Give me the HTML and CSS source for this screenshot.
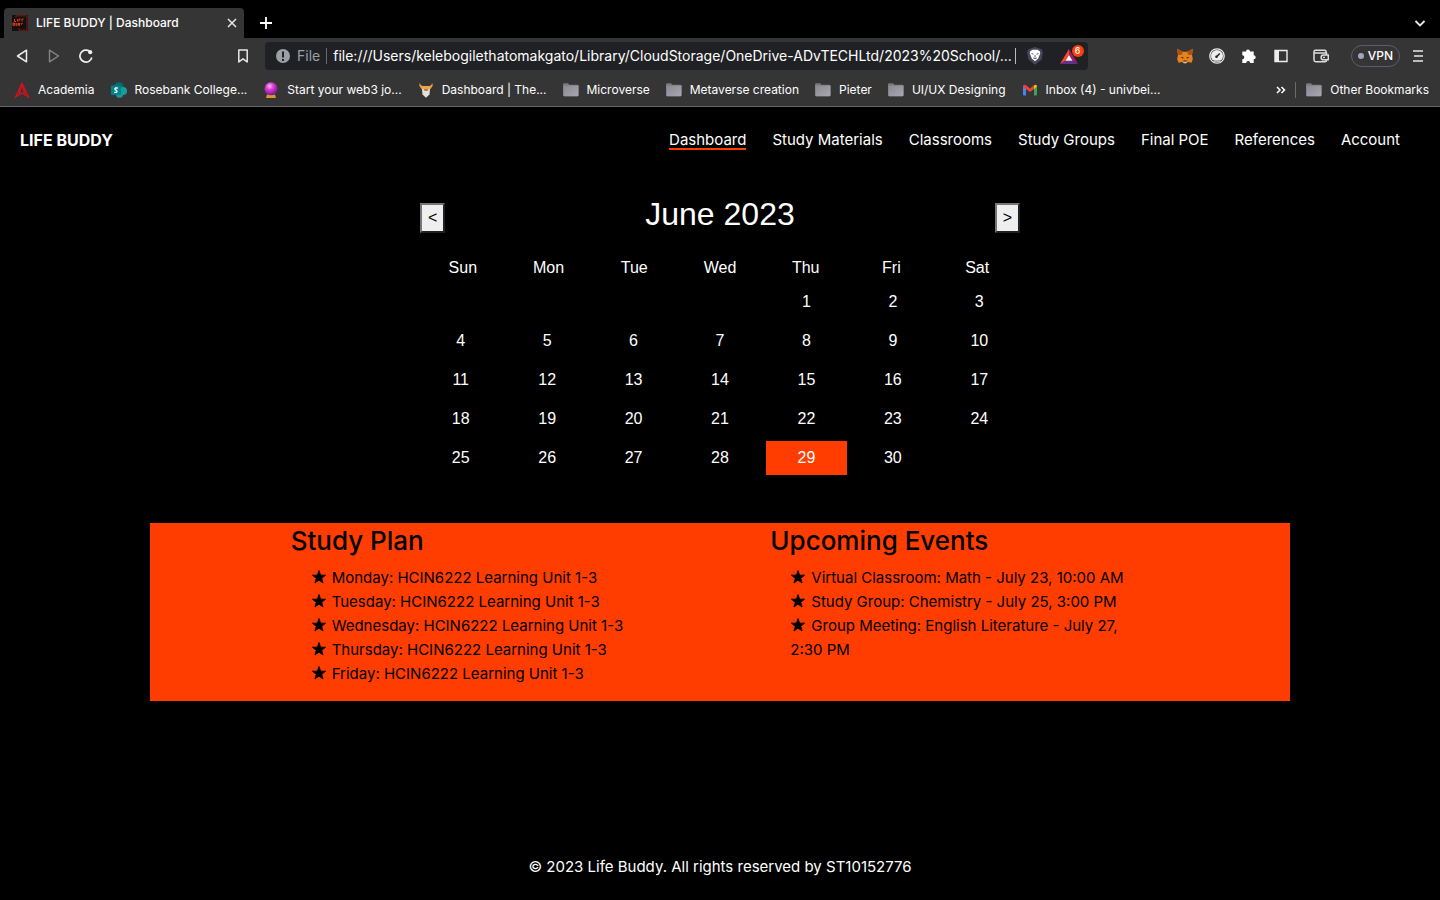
FILE: index.html
```html
<!DOCTYPE html>
<html lang="en">
<head>
<meta charset="utf-8">
<title>LIFE BUDDY | Dashboard</title>
<link rel="stylesheet" href="styles.css">
</head>
<body>
<svg class="defs" width="0" height="0" aria-hidden="true">
  <defs>
    <linearGradient id="folderFill" x1="0" y1="0" x2="1" y2="1"><stop offset="0" stop-color="#8a8a90"/><stop offset="1" stop-color="#a9a7b3"/></linearGradient>
    <radialGradient id="ballFill" cx=".4" cy=".3" r=".7"><stop offset="0" stop-color="#ffb8f5"/><stop offset=".4" stop-color="#d63fd0"/><stop offset="1" stop-color="#7a1590"/></radialGradient>
    <symbol id="folder" viewBox="0 0 16 16"><path d="M0 2.500Q0 1.300 1.200 1.300H5l1.500 1.500h7.800Q15.500 2.800 15.500 4V13q0 1.200-1.200 1.200H1.200Q0 14.200 0 13z" fill="#77777d"/><path d="M.5 3.500h15V13q0 1.200-1.200 1.200H1.200Q.5 14 .5 13z" fill="url(#folderFill)"/></symbol>
    <symbol id="star" viewBox="0 0 16 16"><path d="M8 1.500l1.600 4.700h5L10.700 9.200l1.400 4.800L8 11.200 3.900 14l1.400-4.800L1.400 6.200h5z" fill="#000" stroke="#000" stroke-width=".9" stroke-linejoin="round"/></symbol>
  </defs>
</svg>

<header class="browser">
  <div class="tabs">
    <div class="tab">
      <svg class="i16" viewBox="0 0 16 16"><path fill="#141010" d="M0 0h16v16H0z"/><path d="M4 .8h11v14.400H7M4 .8V3M7 15.200V13" fill="none" stroke="#7a1c10"/><path d="M2.500 4v2.500h1.500M5.500 4v2.500M7 6.500V4h1.500M10 6.500V4h1.500M1 10.500V8h1.500v2.500zM4 8v2.500h1V8M6.500 8v2.500h1V8M9 8l.5 1.500L10.500 8" fill="none" stroke="#e03a1c"/></svg>
      <span class="tab-title">LIFE BUDDY | Dashboard</span>
      <button class="icon-btn" aria-label="Close tab"><svg class="i12" viewBox="0 0 12 12"><path d="M2 2l8 8M10 2l-8 8" stroke="#e8e8e8" stroke-width="1.500"/></svg></button>
    </div>
    <button class="icon-btn new-tab" aria-label="New tab"><svg class="i12" viewBox="0 0 12 12"><path d="M6 0v12M0 6h12" stroke="#fff" stroke-width="1.800"/></svg></button>
    <button class="icon-btn tab-search" aria-label="Search tabs"><svg class="i12" viewBox="0 0 12 12"><path d="M1.500 4L6 8.500 10.500 4" fill="none" stroke="#e8e8e8" stroke-width="1.800"/></svg></button>
  </div>

  <div class="toolbar">
    <div class="history">
      <button class="icon-btn" aria-label="Back"><svg class="i16" viewBox="0 0 16 16"><path d="M12.500 2.200v11.600L3.500 8z" fill="none" stroke="#eee" stroke-width="1.500" stroke-linejoin="round"/></svg></button>
      <button class="icon-btn" aria-label="Forward"><svg class="i16" viewBox="0 0 16 16"><path d="M3.500 2.200v11.600l9-5.800z" fill="none" stroke="#858585" stroke-width="1.400" stroke-linejoin="round"/></svg></button>
      <button class="icon-btn" aria-label="Reload"><svg class="i16" viewBox="0 0 16 16"><path d="M13.800 9.500A6 6 0 1 1 11.500 3.200" fill="none" stroke="#eee" stroke-width="1.700"/><circle cx="12.200" cy="4.200" r="2.100" fill="#eee"/></svg></button>
    </div>
    <button class="icon-btn" aria-label="Bookmark this page"><svg class="i16" viewBox="0 0 16 16"><path d="M3.800 2h8.400v12L8 10.800 3.800 14z" fill="none" stroke="#e8e8e8" stroke-width="1.500" stroke-linejoin="round"/></svg></button>
    <div class="address">
      <svg class="i16" viewBox="0 0 16 16"><circle cx="8" cy="8" r="7" fill="#9aa0a6"/><path d="M8 3.500v6M8 11v2" stroke="#202124" stroke-width="2"/></svg>
      <label class="scheme" for="url">File</label>
      <span class="bar"></span>
      <input id="url" class="url" type="text" value="file:///Users/kelebogilethatomakgato/Library/CloudStorage/OneDrive-ADvTECHLtd/2023%20School/...">
      <span class="bar light"></span>
      <button class="icon-btn shield" aria-label="Shields"><svg class="i18" viewBox="0 0 18 18"><path d="M9 0l3 1 4 1.500.8 3-1.200 7L9 17.800l-6.600-5.300-1.200-7 .8-3L6 1z" fill="#45465c"/><path d="M6.500 2.800h5l2.300 1.400.4 2.300-2 5L9 14.200l-3.200-2.700-2-5 .4-2.300z" fill="#fff"/><path d="M5.500 6.500l2 .7M12.500 6.500l-2 .7M9 8v2.500M7.300 11l1.700.8 1.700-.8" fill="none" stroke="#45465c" stroke-width=".9"/></svg></button>
      <button class="icon-btn rewards" aria-label="Rewards, 6 new"><svg class="i18" viewBox="0 0 18 18"><path d="M9 2L0 17l5.500-3.200L9 8z" fill="#ff4724"/><path d="M9 2l9 15-5.500-3.200L9 8z" fill="#9e1f63"/><path d="M0 17h18l-5.500-3.200h-7z" fill="#662d91"/><path d="M9 8l3.500 5.800h-7z" fill="#fff"/></svg><span class="badge">6</span></button>
    </div>
    <div class="extensions">
      <button class="icon-btn" aria-label="MetaMask"><svg class="i16" viewBox="0 0 16 16"><path d="M0 .8l6 3h4l6-3-1 6 .8 4.500-1.300 3.500-3.800-.8L9 15.500H7L5.300 14l-3.800.8L.2 11.300 1 6.800z" fill="#e8821e"/><path d="M0 .8l6 3L4.500 7 1 6.800zM16 .8l-6 3L11.500 7l3.500-.2z" fill="#a9540f"/><path d="M3.500 9l3 .3-.5 1.400zM12.500 9l-3 .3.5 1.400z" fill="#3b2b20"/><path d="M6 13.200h4L9.500 15h-3z" fill="#d7c1b3"/><path d="M6.500 12.500h3l.3 1H6.200z" fill="#222"/></svg></button>
      <button class="icon-btn" aria-label="Speed test"><svg class="i16" viewBox="0 0 16 16"><circle cx="8" cy="8" r="7.200" fill="#353535" stroke="#eee" stroke-width="1.300"/><path d="M3.500 12a6 6 0 1 1 9 0z" fill="#eee"/><path d="M4.500 13h7" stroke="#eee" stroke-width="1.400"/><path d="M7.500 8.800l3.300-3.300" stroke="#222" stroke-width="1.500"/><circle cx="7.500" cy="8.800" r="1.300" fill="#222"/></svg></button>
      <button class="icon-btn" aria-label="Extensions"><svg class="i16" viewBox="0 0 16 16"><path d="M1.300 3.500H5a2 2 0 1 1 4 0h3.700v3.700a2 2 0 1 1 0 4V15H9.200a2 2 0 1 0-4 0H1.300v-3.800a2 2 0 1 0 0-4z" fill="#fff"/></svg></button>
      <button class="icon-btn" aria-label="Sidebar"><svg class="i16" viewBox="0 0 16 16"><path d="M2 2.500h12v11H2z" fill="none" stroke="#eee" stroke-width="1.400"/><path d="M2 2h4v12H2z" fill="#eee"/></svg></button>
      <button class="icon-btn wallet" aria-label="Wallet"><svg class="i16" viewBox="0 0 16 16"><path d="M13 5V3.500Q13 2.300 11.800 2.300H2.500Q1 2.300 1 3.800V12q0 1.700 1.700 1.700H12q1.500 0 1.500-1.500V12M1 5h12.500v2" fill="none" stroke="#ddd" stroke-width="1.500"/><path d="M15.300 7H10.500a2.400 2.400 0 0 0 0 4.800h4.800z" fill="none" stroke="#ddd" stroke-width="1.500"/><path d="M10 9.400h2" stroke="#ddd" stroke-width="1.400"/></svg></button>
      <button class="vpn"><span class="dot"></span>VPN</button>
      <button class="icon-btn" aria-label="Menu"><svg class="i12" viewBox="0 0 12 12"><path d="M1 1h10M2 6h9M1 11h10" stroke="#e8e8e8" stroke-width="1.600"/></svg></button>
    </div>
  </div>

  <nav class="bookmarks" aria-label="Bookmarks">
    <a href="#"><svg class="i16" viewBox="0 0 16 16"><path d="M8 1.500L1.500 15 8 11l6.500 4zM8 1.500L5.200 12.500M8 1.500l2.800 11" fill="none" stroke="#d8121d" stroke-width="1.300"/></svg>Academia</a>
    <a href="#"><svg class="i16" viewBox="0 0 16 16"><circle cx="8" cy="5" r="4.800" fill="#036c70"/><circle cx="12" cy="9" r="4" fill="#1a9ba1"/><circle cx="8.500" cy="12.300" r="3.500" fill="#1a9ba1"/><rect y="3.500" width="10" height="9.500" rx="1" fill="#038387"/><path d="M6.800 6H4.500q-1.200 1 0 1.900l1 .5q1.200.9-.2 2H3.200" fill="none" stroke="#fff" stroke-width="1.300"/></svg>Rosebank College...</a>
    <a href="#"><svg class="i16" viewBox="0 0 16 16"><path d="M4 12.500h8l1 3.500H3z" fill="#d99a2b"/><circle cx="8" cy="6.800" r="6.500" fill="url(#ballFill)"/></svg>Start your web3 jo...</a>
    <a href="#"><svg class="i16" viewBox="0 0 16 16"><path d="M2 .5q0 3 2.500 3.500h7Q14 3.500 14 .5l.8 3L12.500 7h-9L1.200 3.500z" fill="#e9a64a"/><path d="M4 4h8v3H4z" fill="#e9a64a"/><path d="M4 7h8l-.5 5.500L8 15.800l-3.500-3.300z" fill="#e6e1d8"/><path d="M5.500 7h5l-1 2h-3z" fill="#b97c51"/></svg>Dashboard | The...</a>
    <a href="#"><svg class="i16"><use href="#folder"/></svg>Microverse</a>
    <a href="#"><svg class="i16"><use href="#folder"/></svg>Metaverse creation</a>
    <a href="#"><svg class="i16"><use href="#folder"/></svg>Pieter</a>
    <a href="#"><svg class="i16"><use href="#folder"/></svg>UI/UX Designing</a>
    <a href="#"><svg class="i16" viewBox="0 0 16 16"><path d="M1 4h3v9.500H2q-1 0-1-1z" fill="#4285f4"/><path d="M12 4h3v8.500q0 1-1 1h-2z" fill="#34a853"/><path d="M1 4.500Q1 2.700 2.500 2.700L4 3.200l4 3.200 4-3.200v3.700L8 10 1 5z" fill="#ea4335"/><path d="M12 3.200q3-1.500 3 1.300l-3 2.400z" fill="#fbbc04"/></svg>Inbox (4) - univbei...</a>
    <button class="icon-btn overflow" aria-label="More bookmarks"><svg class="i12" viewBox="0 0 12 12"><path d="M2 3l3 3-3 3M6.500 3l3 3-3 3" fill="none" stroke="#fff" stroke-width="1.500"/></svg></button>
    <span class="bar"></span>
    <a href="#"><svg class="i16"><use href="#folder"/></svg>Other Bookmarks</a>
  </nav>
</header>

<div class="page">
  <header class="site-header">
    <strong>LIFE BUDDY</strong>
    <nav class="site-nav" aria-label="Main">
      <a class="active" href="#">Dashboard</a>
      <a href="#">Study Materials</a>
      <a href="#">Classrooms</a>
      <a href="#">Study Groups</a>
      <a href="#">Final POE</a>
      <a href="#">References</a>
      <a href="#">Account</a>
    </nav>
  </header>

  <main>
    <section class="calendar">
      <div class="month">
        <button aria-label="Previous month">&lt;</button>
        <h1>June 2023</h1>
        <button aria-label="Next month">&gt;</button>
      </div>
      <div class="weekdays"><span>Sun</span><span>Mon</span><span>Tue</span><span>Wed</span><span>Thu</span><span>Fri</span><span>Sat</span></div>
      <div class="days">
        <span class="first">1</span><span>2</span><span>3</span>
        <span>4</span><span>5</span><span>6</span><span>7</span><span>8</span><span>9</span><span>10</span>
        <span>11</span><span>12</span><span>13</span><span>14</span><span>15</span><span>16</span><span>17</span>
        <span>18</span><span>19</span><span>20</span><span>21</span><span>22</span><span>23</span><span>24</span>
        <span>25</span><span>26</span><span>27</span><span>28</span><span class="today">29</span><span>30</span>
      </div>
    </section>

    <section class="plans">
      <div>
        <h2>Study Plan</h2>
        <ul>
          <li><svg class="i16"><use href="#star"/></svg>Monday: HCIN6222 Learning Unit 1-3</li>
          <li><svg class="i16"><use href="#star"/></svg>Tuesday: HCIN6222 Learning Unit 1-3</li>
          <li><svg class="i16"><use href="#star"/></svg>Wednesday: HCIN6222 Learning Unit 1-3</li>
          <li><svg class="i16"><use href="#star"/></svg>Thursday: HCIN6222 Learning Unit 1-3</li>
          <li><svg class="i16"><use href="#star"/></svg>Friday: HCIN6222 Learning Unit 1-3</li>
        </ul>
      </div>
      <div>
        <h2>Upcoming Events</h2>
        <ul>
          <li><svg class="i16"><use href="#star"/></svg>Virtual Classroom: Math - July 23, 10:00 AM</li>
          <li><svg class="i16"><use href="#star"/></svg>Study Group: Chemistry - July 25, 3:00 PM</li>
          <li><svg class="i16"><use href="#star"/></svg>Group Meeting: English Literature - July 27, 2:30 PM</li>
        </ul>
      </div>
    </section>
  </main>

  <footer>© 2023 Life Buddy. All rights reserved by ST10152776</footer>
</div>
</body>
</html>
```
FILE: styles.css
```css
* { box-sizing: border-box; }

body {
  margin: 0;
  min-height: 100vh;
  display: flex;
  flex-direction: column;
  background: #000;
  color: #fff;
  font: 15px/24px Inter, "Liberation Sans", sans-serif;
}

a { color: inherit; text-decoration: none; }
button, input { font: inherit; color: inherit; }
svg { flex: none; }

.defs { position: absolute; }
.i12 { width: 12px; height: 12px; }
.i16 { width: 16px; height: 16px; }
.i18 { width: 18px; height: 18px; }

.icon-btn {
  display: flex;
  padding: 0;
  border: 0;
  background: none;
}

.bar { width: 1px; height: 16px; background: #6b6b6f; }
.bar.light { background: #bbb; }

/* Browser window */
.browser {
  background: #353535;
  border-bottom: 1px solid #666;
  font-size: 12px;
  font-weight: 500;
}

.tabs {
  height: 38px;
  padding: 8px 14px 0 4px;
  display: flex;
  align-items: center;
  gap: 16px;
  background: #000;
}

.tab {
  width: 240px;
  height: 30px;
  padding: 0 6px 0 8px;
  display: flex;
  align-items: center;
  gap: 8px;
  border-radius: 4px 4px 0 0;
  background: #353535;
}

.tab-title { flex: 1; }
.tab-search { margin-left: auto; }

.toolbar {
  height: 36px;
  padding: 0 16px 0 14px;
  display: flex;
  align-items: center;
}

.history { width: 221px; display: flex; gap: 16px; }

.address {
  flex: 1;
  height: 28px;
  margin-left: 14px;
  padding: 0 10px;
  display: flex;
  align-items: center;
  gap: 6px;
  border-radius: 4px;
  background: #202124;
}

.scheme { color: #9aa0a6; font-size: 14px; font-weight: 400; }

.url {
  flex: 1;
  min-width: 0;
  margin-right: -4px;
  padding: 0;
  border: 0;
  outline: 0;
  background: none;
  font-size: 14px;
  font-weight: 400;
}

.shield { margin: 0 10px 0 4px; }
.rewards { position: relative; }

.badge {
  position: absolute;
  top: -2px;
  right: -6px;
  width: 12px;
  height: 12px;
  border-radius: 6px;
  background: #fb3f0a;
  font-size: 9px;
  line-height: 12px;
  text-align: center;
}

.extensions {
  margin-left: 89px;
  display: flex;
  align-items: center;
  gap: 16px;
}

.wallet { margin: 0 6px 0 8px; }

.vpn {
  height: 22px;
  margin-right: -4px;
  padding: 0 6px;
  display: flex;
  align-items: center;
  gap: 4px;
  border: 1px solid #5d5c72;
  border-radius: 11px;
  background: none;
}

.dot { width: 6px; height: 6px; border-radius: 3px; background: #a5a4c0; }

.bookmarks {
  height: 32px;
  padding: 0 11px 0 14px;
  display: flex;
  align-items: center;
  gap: 16px;
  font-weight: 400;
  white-space: nowrap;
}

.bookmarks a { display: flex; align-items: center; gap: 8px; }
.overflow { margin-left: auto; }
.bookmarks .bar { margin: 0 -6px -0px -8px; }

/* Site */
.page { flex: 1; display: flex; flex-direction: column; }

.site-header {
  padding: 21px 40px 19px 20px;
  display: flex;
  justify-content: space-between;
}

.site-header strong { font-size: 16px; }
.site-nav { display: flex; gap: 26px; }
.active { height: 22px; border-bottom: 2px solid #ff3d00; }

main { flex: 1; padding-top: 24px; }

.calendar {
  width: 600px;
  max-width: 100%;
  margin: 0 auto;
  font-family: "Liberation Sans", Arial, sans-serif;
  font-size: 16px;
  text-align: center;
}

.month {
  margin-bottom: 15px;
  display: flex;
  align-items: center;
  justify-content: space-between;
}

.month h1 { margin: 0 0 8px; font-size: 32px; font-weight: 400; line-height: 38px; }

.month button {
  padding: 1px 6px;
  border: 2px outset #767676;
  background: #efefef;
  color: #000;
}

.weekdays { display: grid; grid-template-columns: repeat(7, 1fr); }

.days {
  margin-top: 5px;
  display: grid;
  grid-template-columns: repeat(7, 1fr);
  gap: 5px;
}

.days span { padding: 5px; }
.days .first { grid-column: 5; }
.today { background: #ff3d00; }

.plans {
  width: 1140px;
  max-width: 100%;
  margin: 48px auto 0;
  display: grid;
  grid-template-columns: 339px 379px;
  justify-content: space-evenly;
  background: #ff3d00;
  color: #000;
}

.plans h2 { margin: 0; padding-top: 1px; font-size: 26px; font-weight: 500; line-height: 34px; }
.plans ul { margin: 8px 0 15px; padding-left: 20px; list-style: none; }
.plans li svg { margin-right: 5px; vertical-align: -2px; }

footer { padding: 20px 20px 21px; text-align: center; }
```
